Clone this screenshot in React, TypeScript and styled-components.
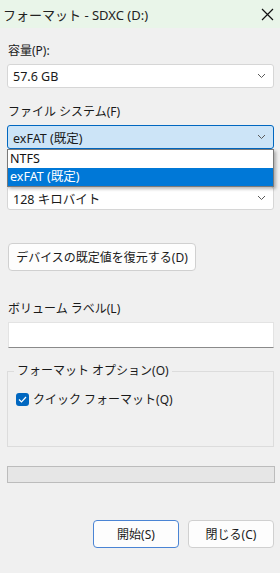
import styled, { createGlobalStyle } from 'styled-components'

const GlobalStyle = createGlobalStyle`
  html, body {
    margin: 0;
    padding: 0;
    background: #f0f0f0;
  }
  * {
    box-sizing: border-box;
  }
`

const Window = styled.div`
  width: 280px;
  height: 573px;
  background: #f0f0f0;
  font-family: 'Noto Sans', 'Noto Sans CJK JP', sans-serif;
  font-size: 12px;
  color: #1a1a1a;
  overflow: hidden;
`

const TitleBar = styled.div`
  height: 28px;
  background: #e9f5e9;
  display: flex;
  align-items: center;
  justify-content: space-between;
  padding: 0 6px 0 3px;
  font-size: 13px;
  color: #222;
`

const CloseButton = styled.div`
  width: 14px;
  height: 14px;
  display: flex;
  align-items: center;
  justify-content: center;
`

const Body = styled.div`
  padding: 0 6px 0 7px;
  display: flex;
  flex-direction: column;
`

const Label = styled.div<{ $top: number }>`
  margin-top: ${(p) => p.$top}px;
  height: 16px;
  line-height: 16px;
  padding-left: 1px;
  margin-bottom: 5px;
`

// room of the allocation label, which the open list covers
const Spacer = styled.div`
  height: 37px;
`

const ComboWrap = styled.div`
  position: relative;
`

const Combo = styled.div<{ $active?: boolean }>`
  height: 24px;
  display: flex;
  align-items: center;
  justify-content: space-between;
  padding: 0 7px 0 5px;
  background: ${(p) => (p.$active ? '#cce4f7' : '#ffffff')};
  border: 1px solid ${(p) => (p.$active ? '#0067c0' : '#d6d6d6')};
  border-radius: 3px;
  font-size: 12.5px;
`

const ListBox = styled.div`
  position: absolute;
  top: 100%;
  left: 0;
  right: 0;
  z-index: 2;
  background: #fff;
  border: 1px solid #7a7a7a;
  box-shadow: 2px 2px 3px rgba(0, 0, 0, 0.28);
`

const ListItem = styled.div<{ $selected?: boolean }>`
  height: 18px;
  line-height: 18px;
  padding-left: 2px;
  font-size: 12.5px;
  background: ${(p) => (p.$selected ? '#0078d7' : '#fff')};
  color: ${(p) => (p.$selected ? '#fff' : '#111')};
`

const Button = styled.button<{ $default?: boolean; $width: number }>`
  width: ${(p) => p.$width}px;
  height: 28px;
  background: #fdfdfd;
  border: 1px solid ${(p) => (p.$default ? '#4a84d4' : '#d0d0d0')};
  border-radius: 4px;
  font-family: inherit;
  font-size: 12px;
  color: #1a1a1a;
  padding: 0;
  display: flex;
  align-items: center;
  justify-content: center;
`

const RestoreRow = styled.div`
  margin-top: 33px;
  padding-left: 1px;
`

const TextInput = styled.div`
  height: 26px;
  background: #fff;
  border: 1px solid #e3e3e3;
  border-bottom: 1px solid #8a8a8a;
  margin-left: 1px;
`

const GroupBox = styled.fieldset`
  margin: 16px 0 0 0;
  height: 83px;
  border: 1px solid #dcdcdc;
  padding: 0 8px;
  min-width: 0;
`

const Legend = styled.legend`
  padding: 0 3px;
  margin-left: -2px;
  font-size: 12px;
  line-height: 14px;
`

const CheckRow = styled.div`
  display: flex;
  align-items: center;
  gap: 4px;
  margin-top: 12px;
`

const CheckBox = styled.div`
  width: 13px;
  height: 13px;
  border-radius: 3px;
  background: #0067c0;
  display: flex;
  align-items: center;
  justify-content: center;
`

const Progress = styled.div`
  margin-top: 19px;
  height: 17px;
  background: #e6e6e6;
  border: 1px solid #bcbcbc;
  margin-right: -1px;
`

const Footer = styled.div`
  margin-top: 37px;
  display: flex;
  justify-content: flex-end;
  gap: 9px;
`

const Chevron = () => (
  <svg width="9" height="6" viewBox="0 0 9 6">
    <path d="M1 1 L4.5 4.5 L8 1" fill="none" stroke="#5a5a5a" strokeWidth="1" />
  </svg>
)

const App = () => {
  return (
    <>
      <GlobalStyle />
      <Window>
        <TitleBar>
          <span>フォーマット - SDXC (D:)</span>
          <CloseButton>
            <svg width="13" height="13" viewBox="0 0 13 13">
              <path d="M1 1 L12 12 M12 1 L1 12" stroke="#111" strokeWidth="1.2" />
            </svg>
          </CloseButton>
        </TitleBar>
        <Body>
          <Label $top={15}>容量(P):</Label>
          <Combo>
            <span>57.6 GB</span>
            <Chevron />
          </Combo>

          <Label $top={16}>ファイル システム(F)</Label>
          <ComboWrap>
            <Combo $active>
              <span>exFAT (既定)</span>
              <Chevron />
            </Combo>
            <ListBox>
              <ListItem>NTFS</ListItem>
              <ListItem $selected>exFAT (既定)</ListItem>
            </ListBox>
          </ComboWrap>

          <Spacer />
          <Combo>
            <span>128 キロバイト</span>
            <Chevron />
          </Combo>

          <RestoreRow>
            <Button $width={188}>デバイスの既定値を復元する(D)</Button>
          </RestoreRow>

          <Label $top={30}>ボリューム ラベル(L)</Label>
          <TextInput />

          <GroupBox>
            <Legend>フォーマット オプション(O)</Legend>
            <CheckRow>
              <CheckBox>
                <svg width="9" height="7" viewBox="0 0 9 7">
                  <path d="M1 3.5 L3.5 6 L8 1" fill="none" stroke="#fff" strokeWidth="1.2" />
                </svg>
              </CheckBox>
              <span>クイック フォーマット(Q)</span>
            </CheckRow>
          </GroupBox>

          <Progress />

          <Footer>
            <Button $default $width={86}>開始(S)</Button>
            <Button $width={86}>閉じる(C)</Button>
          </Footer>
        </Body>
      </Window>
    </>
  )
}

export default App
